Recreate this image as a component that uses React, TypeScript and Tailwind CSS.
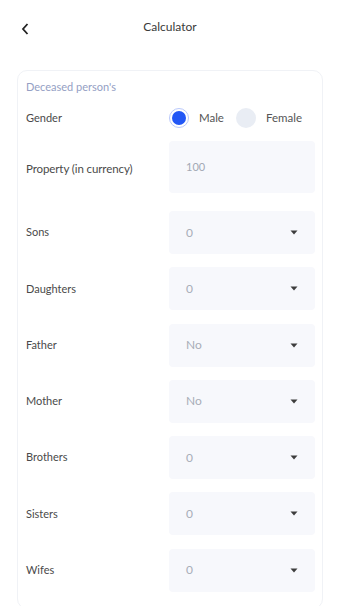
import { useState } from "react";

const rows = [
  { label: "Sons", value: "0" },
  { label: "Daughters", value: "0" },
  { label: "Father", value: "No" },
  { label: "Mother", value: "No" },
  { label: "Brothers", value: "0" },
  { label: "Sisters", value: "0" },
  { label: "Wifes", value: "0" },
];

function Caret() {
  return (
    <svg width="8" height="5" viewBox="0 0 8 5" className="shrink-0">
      <path d="M0.5 0.5h7L4 4.5z" fill="#3d3d3d" />
    </svg>
  );
}

function Radio({ checked, label, onClick }: { checked: boolean; label: string; onClick: () => void }) {
  return (
    <button onClick={onClick} className="flex items-center gap-[10px]">
      {checked ? (
        <span className="flex h-[20px] w-[20px] items-center justify-center rounded-full border border-[#b9c8fb] bg-white">
          <span className="h-[14px] w-[14px] rounded-full bg-[#2257f5]" />
        </span>
      ) : (
        <span className="h-[20px] w-[20px] rounded-full bg-[#e9edf4]" />
      )}
      <span className="text-[11.5px] text-[#555]">{label}</span>
    </button>
  );
}

export default function App() {
  const [gender, setGender] = useState("male");
  return (
    <div className="min-h-[606px] w-[340px] overflow-hidden bg-white font-['Lato',sans-serif]">
      <header className="relative flex h-[54px] items-center justify-center">
        <button className="absolute left-[17px] top-[19px] p-1">
          <svg width="8" height="12" viewBox="0 0 8 12">
            <path d="M6.5 1L2 6l4.5 5" fill="none" stroke="#222" strokeWidth="1.8" />
          </svg>
        </button>
        <h1 className="text-[12px] text-[#3a3a3a]">Calculator</h1>
      </header>

      <div className="mx-[17px] mt-[16px] rounded-[10px] border border-[#f0f2f6] pl-[8px] pr-[7px] pt-[9px] pb-[16px]">
        <p className="text-[11px] leading-[14px] text-[#94a0c4]">Deceased person's</p>

        <div className="mt-[14px] flex h-[20px] items-center">
          <span className="flex-1 text-[11px] text-[#4a4a4a]">Gender</span>
          <div className="mr-[13px] flex items-center gap-[12px]">
            <Radio checked={gender === "male"} label="Male" onClick={() => setGender("male")} />
            <Radio checked={gender === "female"} label="Female" onClick={() => setGender("female")} />
          </div>
        </div>

        <div className="mt-[13px] flex items-center">
          <span className="flex-1 pt-[4px] text-[11.5px] tracking-[-0.1px] text-[#4a4a4a]">Property (in currency)</span>
          <div className="flex h-[52px] w-[146px] items-center rounded-[4px] bg-[#f7f8fc] px-[17px] text-[11px] text-[#a3a8b4]">
            100
          </div>
        </div>

        <div className="mt-[18px] flex flex-col gap-[13.3px]">
          {rows.map((r) => (
            <div key={r.label} className="flex items-center">
              <span className="flex-1 text-[11px] text-[#4a4a4a]">{r.label}</span>
              <div className="flex h-[43px] w-[146px] items-center justify-between rounded-[4px] bg-[#f7f8fc] pl-[17px] pr-[17px] text-[12px] text-[#a8adb8]">
                <span>{r.value}</span>
                <Caret />
              </div>
            </div>
          ))}
        </div>
      </div>
    </div>
  );
}
